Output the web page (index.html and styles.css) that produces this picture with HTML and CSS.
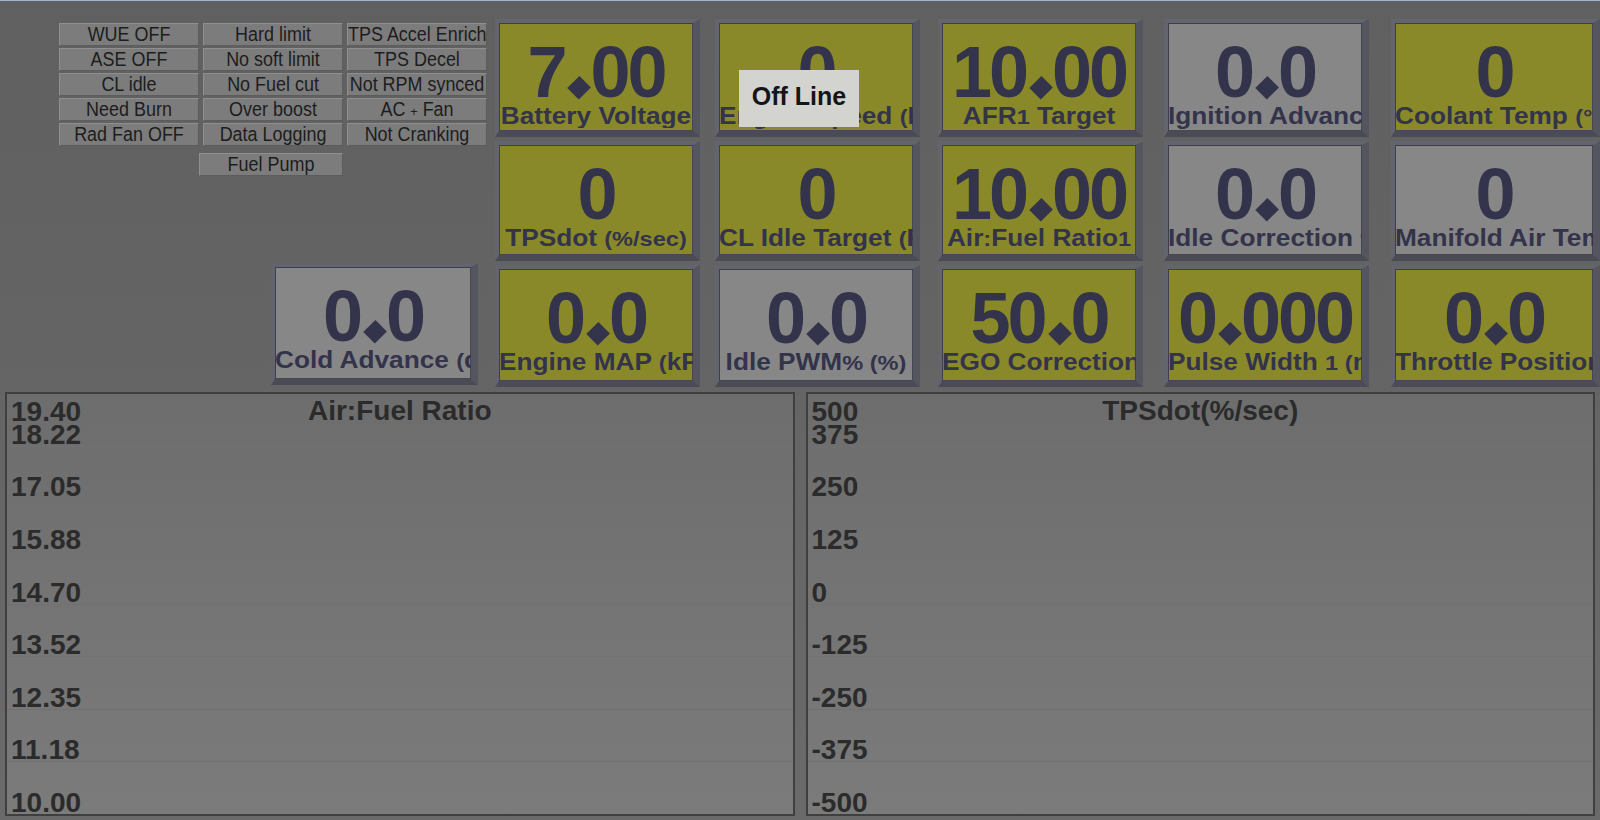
FILE: index.html
```html
<!DOCTYPE html>
<html>
<head>
<meta charset="utf-8">
<title>Dashboard</title>
<link rel="stylesheet" href="styles.css">
</head>
<body>
<div class="app">
  <div class="top">
    <div class="ind-panel">
      <div class="ind"><span class="t">WUE OFF</span></div>
      <div class="ind"><span class="t">Hard limit</span></div>
      <div class="ind"><span class="t">TPS Accel Enrich</span></div>
      <div class="ind"><span class="t">ASE OFF</span></div>
      <div class="ind"><span class="t">No soft limit</span></div>
      <div class="ind"><span class="t">TPS Decel</span></div>
      <div class="ind"><span class="t">CL idle</span></div>
      <div class="ind"><span class="t">No Fuel cut</span></div>
      <div class="ind"><span class="t">Not RPM synced</span></div>
      <div class="ind"><span class="t">Need Burn</span></div>
      <div class="ind"><span class="t">Over boost</span></div>
      <div class="ind"><span class="t">AC <span class="plus">+</span> Fan</span></div>
      <div class="ind"><span class="t">Rad Fan OFF</span></div>
      <div class="ind"><span class="t">Data Logging</span></div>
      <div class="ind"><span class="t">Not Cranking</span></div>
      <div class="ind fuel"><span class="t">Fuel Pump</span></div>
    </div>

    <div class="gauge cold"><div class="face g"><div class="val">0<span class="dot">.</span>0</div><div class="lbl">Cold Advance <span class="s">(</span>deg<span class="s">)</span></div></div></div>

    <div class="gauge"><div class="face y"><div class="val">7<span class="dot">.</span>00</div><div class="lbl">Battery Voltage</div></div></div>
    <div class="gauge"><div class="face y"><div class="val">0</div><div class="lbl">Engine Speed <span class="s">(</span>RPM<span class="s">)</span></div></div></div>
    <div class="gauge"><div class="face y"><div class="val">10<span class="dot">.</span>00</div><div class="lbl">AFR<span class="s">1</span> Target</div></div></div>
    <div class="gauge"><div class="face g"><div class="val">0<span class="dot">.</span>0</div><div class="lbl">Ignition Advance <span class="s">(</span>deg<span class="s">)</span></div></div></div>
    <div class="gauge last"><div class="face y"><div class="val">0</div><div class="lbl">Coolant Temp <span class="s">(°F)</span></div></div></div>

    <div class="gauge"><div class="face y"><div class="val">0</div><div class="lbl">TPSdot <span class="s">(%/sec)</span></div></div></div>
    <div class="gauge"><div class="face y"><div class="val">0</div><div class="lbl">CL Idle Target <span class="s">(</span>RPM<span class="s">)</span></div></div></div>
    <div class="gauge"><div class="face y"><div class="val">10<span class="dot">.</span>00</div><div class="lbl">Air<span class="s">:</span>Fuel Ratio<span class="s">1</span></div></div></div>
    <div class="gauge"><div class="face g"><div class="val">0<span class="dot">.</span>0</div><div class="lbl">Idle Correction <span class="s">%</span></div></div></div>
    <div class="gauge last"><div class="face g"><div class="val">0</div><div class="lbl">Manifold Air Temp <span class="s">(°F)</span></div></div></div>

    <div class="gauge"><div class="face y"><div class="val">0<span class="dot">.</span>0</div><div class="lbl">Engine MAP <span class="s">(</span>kPa<span class="s">)</span></div></div></div>
    <div class="gauge"><div class="face g"><div class="val">0<span class="dot">.</span>0</div><div class="lbl">Idle PWM<span class="s">% (%)</span></div></div></div>
    <div class="gauge"><div class="face y"><div class="val">50<span class="dot">.</span>0</div><div class="lbl">EGO Correction <span class="s">(%)</span></div></div></div>
    <div class="gauge"><div class="face y"><div class="val">0<span class="dot">.</span>000</div><div class="lbl">Pulse Width <span class="s">1 (</span>ms<span class="s">)</span></div></div></div>
    <div class="gauge last"><div class="face y"><div class="val">0<span class="dot">.</span>0</div><div class="lbl">Throttle Position <span class="s">(%)</span></div></div></div>
  </div>

  <div class="charts">
    <div class="chart">
      <div class="band first"><span class="ax up">19.40</span><span class="title">Air:Fuel Ratio</span><span class="ax">18.22</span></div>
      <div class="band"><span class="ax">17.05</span></div>
      <div class="band"><span class="ax">15.88</span></div>
      <div class="band"><span class="ax">14.70</span></div>
      <div class="band"><span class="ax">13.52</span></div>
      <div class="band"><span class="ax">12.35</span></div>
      <div class="band"><span class="ax">11.18</span></div>
      <div class="band"><span class="ax">10.00</span></div>
    </div>
    <div class="chart">
      <div class="band first"><span class="ax up">500</span><span class="title">TPSdot(%/sec)</span><span class="ax">375</span></div>
      <div class="band"><span class="ax">250</span></div>
      <div class="band"><span class="ax">125</span></div>
      <div class="band"><span class="ax">0</span></div>
      <div class="band"><span class="ax">-125</span></div>
      <div class="band"><span class="ax">-250</span></div>
      <div class="band"><span class="ax">-375</span></div>
      <div class="band"><span class="ax">-500</span></div>
    </div>
  </div>

  <div class="tip">Off Line</div>
</div>
</body>
</html>
```

FILE: styles.css
```css
html, body {
  margin: 0;
  padding: 0;
}
body {
  background: #626262;
  font-family: "Liberation Sans", Arial, sans-serif;
}
.app {
  position: relative;
  width: 1600px;
  height: 820px;
  box-sizing: border-box;
  border-top: 1px solid #a3b3cc;
  background: linear-gradient(#606060, #6a6a6a);
  overflow: hidden;
}

/* ---------- top area ---------- */
.top {
  display: grid;
  grid-template-columns: 436px 220px 223px 226px 227px 209px;
  grid-template-rows: 118px 120px 122px;
  row-gap: 4px;
  padding: 18px 0 0 59px;
}

.ind-panel {
  grid-column: 1;
  grid-row: 1 / 3;
  padding-top: 4px;
  display: grid;
  grid-template-columns: repeat(3, 140px);
  grid-auto-rows: 23px;
  column-gap: 4px;
  row-gap: 2px;
  align-content: start;
}
.ind {
  box-sizing: border-box;
  height: 23px;
  background: #7c7c7c;
  border: 1px solid;
  border-color: #8f8f8f #5c5c5c #5c5c5c #8f8f8f;
  overflow: hidden;
  color: #1d1d1d;
}
.ind .t {
  display: block;
  width: 108.7%;
  transform: scaleX(0.92);
  transform-origin: 0 0;
  text-align: center;
  white-space: nowrap;
  font-size: 19.5px;
  line-height: 21px;
}
.ind .plus {
  font-size: 0.7em;
}
.ind.fuel {
  grid-column: 2;
  align-self: start;
  margin-top: 5px;
  margin-left: -4px;
}

/* ---------- gauges ---------- */
.gauge {
  box-sizing: border-box;
  width: 205px;
  border-style: solid;
  border-width: 4px 7px 6px 4px;
  border-color: #64646f #55555f #4b4b55 #64646f;
  background: #3b3b46;
}
.gauge.last {
  width: 209px;
}
.gauge.cold {
  grid-column: 1;
  grid-row: 3;
  justify-self: end;
  width: 207px;
  margin-right: 17px;
  margin-top: -2px;
  margin-bottom: 2px;
}
.face {
  height: 100%;
  box-sizing: border-box;
  padding-top: 18px;
  box-shadow: inset 1px 1px 0 #3f3f4b, inset -1px -1px 0 #474752;
  color: #33334b;
  overflow: hidden;
}
.face.y {
  background: #89892a;
}
.face.g {
  background: #878787;
}
.val {
  font-family: "Liberation Sans", Arial, sans-serif;
  font-weight: bold;
  font-size: 72px;
  line-height: 63px;
  letter-spacing: -3px;
  text-align: center;
  white-space: nowrap;
}
.dot {
  display: inline-block;
  margin: 0 5px 0 4px;
  transform-origin: 50% 81.7%;
  transform: translateY(-5.5px) rotate(45deg) scale(1.6);
}
.lbl {
  width: 87.72%;
  transform: scaleX(1.14);
  transform-origin: 0 0;
  overflow: hidden;
  white-space: nowrap;
  text-align: center;
  font-weight: bold;
  font-size: 23px;
  line-height: 24px;
}
.lbl .s {
  font-size: 0.9em;
}

/* ---------- charts ---------- */
.charts {
  display: flex;
  gap: 11px;
  padding: 0 5px;
  margin-top: 5px;
  height: 424px;
}
.chart {
  flex: 1;
  display: flex;
  flex-direction: column;
  border: 2px solid #3f3f3f;
  background: linear-gradient(#6d6d6d, #7b7b7b);
  color: #2b2b2b;
  font-weight: bold;
  font-size: 28px;
  line-height: 28px;
}
.band {
  flex: 1;
  display: grid;
  border-bottom: 1px solid #717171;
}
.band:last-child {
  border-bottom: none;
}
.band > span {
  grid-area: 1 / 1;
}
.ax {
  justify-self: start;
  align-self: end;
  margin-left: 4px;
  margin-bottom: -3px;
}
.ax.up {
  align-self: start;
  margin-top: 4px;
  margin-bottom: 0;
}
.title {
  justify-self: center;
  align-self: start;
  margin-top: 3px;
}

/* ---------- overlay ---------- */
.tip {
  position: absolute;
  left: 739px;
  top: 69px;
  width: 120px;
  height: 57px;
  box-sizing: border-box;
  padding-bottom: 4px;
  background: #d3d3cf;
  color: #141419;
  font-weight: bold;
  font-size: 25px;
  display: flex;
  align-items: center;
  justify-content: center;
}
```
